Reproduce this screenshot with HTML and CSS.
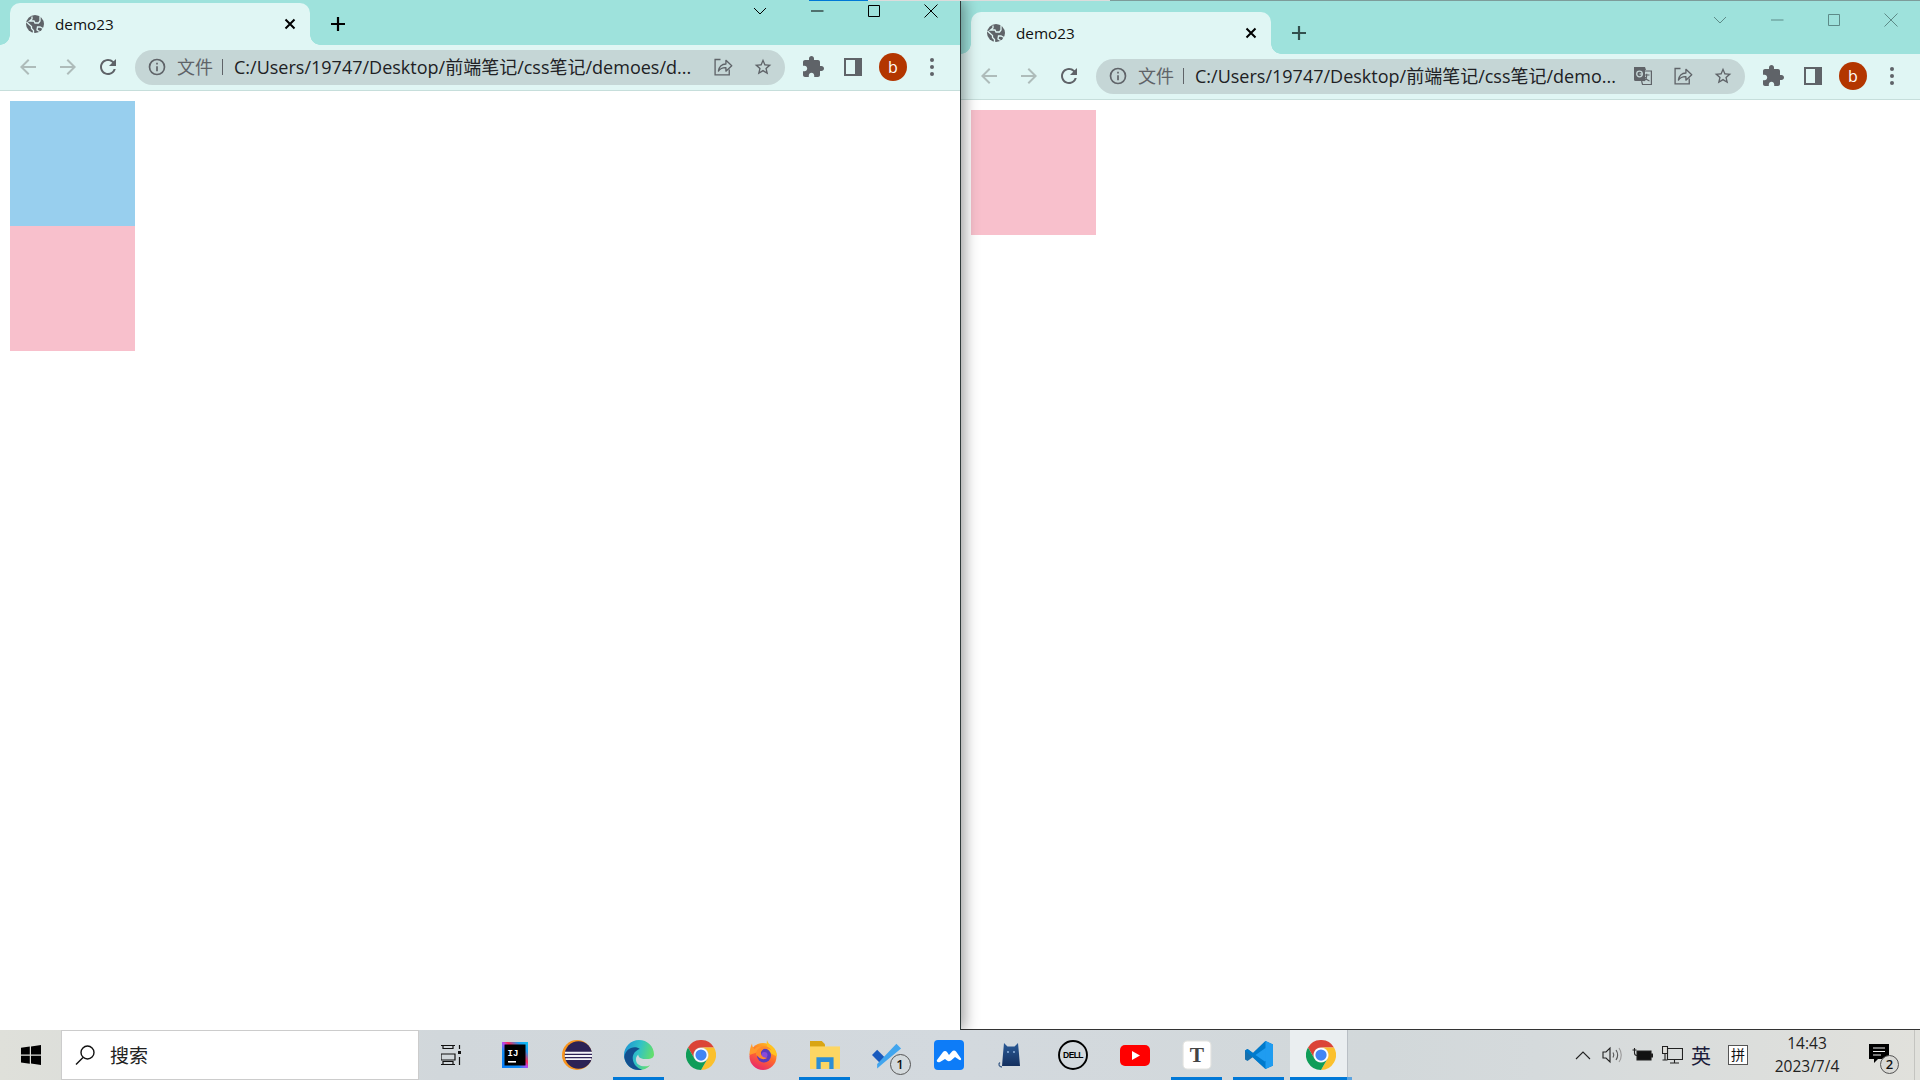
FILE: index.html
```html
<!DOCTYPE html>
<html lang="zh-CN">
<head>
  <meta charset="UTF-8">
  <title>demo23</title>
  <link rel="stylesheet" href="styles.css">
</head>
<body>
<svg class="defs" width="0" height="0">
  <defs>
    <symbol id="i-globe" viewBox="0 0 22 22"><circle cx="11" cy="11" r="9" fill="#5f6368"/><path fill="none" stroke="#e0f6f4" stroke-width="1.3" d="M2.500 9l5 4.500v2l2 2v2.500M8 3.500V6L5.500 8h4.500l1 2h3.500l1.500-2V3.500M19 15.500l-3-1.500h-2.500l-.5 3 2.500 1.500"/></symbol>
    <symbol id="i-back" viewBox="0 0 24 24"><path d="M20 11H7.830l5.590-5.590L12 4l-8 8 8 8 1.410-1.410L7.830 13H20v-2z"/></symbol>
    <symbol id="i-forward" viewBox="0 0 24 24"><path d="M4 11h12.170l-5.590-5.590L12 4l8 8-8 8-1.410-1.410L16.170 13H4v-2z"/></symbol>
    <symbol id="i-reload" viewBox="0 0 24 24"><path d="M17.650 6.350A7.958 7.958 0 0 0 12 4c-4.420 0-7.990 3.580-7.990 8s3.570 8 7.990 8c3.730 0 6.840-2.550 7.730-6h-2.080A5.990 5.990 0 0 1 12 18c-3.310 0-6-2.690-6-6s2.690-6 6-6c1.660 0 3.140.69 4.220 1.780L13 11h7V4l-2.350 2.350z"/></symbol>
    <symbol id="i-info" viewBox="0 0 24 24"><path fill-rule="evenodd" d="M12 2a10 10 0 1 0 0 20 10 10 0 0 0 0-20zm0 2a8 8 0 1 1 0 16 8 8 0 0 1 0-16z"/><path d="M11 11h2v6h-2zM11 7h2v2h-2z"/></symbol>
    <symbol id="i-share" viewBox="0 0 24 24"><path fill="none" stroke="currentColor" stroke-width="1.6" d="M9 3H2.500v18.500h17V15"/><path fill="none" stroke="currentColor" stroke-width="1.6" stroke-linejoin="round" d="M6.500 17c.5-5 4-8.500 9-8.600V4l7 6.600-7 6.400v-4.200c-4-.2-6.800 1-9 4.200z"/></symbol>
    <symbol id="i-star" viewBox="0 0 24 24"><path d="M22 9.240l-7.190-.62L12 2 9.190 8.630 2 9.240l5.460 4.730L5.820 21 12 17.270 18.180 21l-1.630-7.030L22 9.240zM12 15.400l-3.760 2.270 1-4.280-3.320-2.880 4.380-.38L12 6.100l1.710 4.040 4.380.38-3.320 2.880 1 4.280L12 15.400z"/></symbol>
    <symbol id="i-puzzle" viewBox="0 0 24 24"><path d="M20.500 11H19V7c0-1.100-.9-2-2-2h-4V3.500C13 2.120 11.880 1 10.500 1S8 2.120 8 3.500V5H4c-1.100 0-1.990.9-1.990 2v3.800H3.500c1.490 0 2.700 1.210 2.700 2.700s-1.210 2.700-2.700 2.700H2V20c0 1.100.9 2 2 2h3.800v-1.500c0-1.490 1.210-2.700 2.700-2.700 1.490 0 2.700 1.210 2.700 2.700V22H17c1.100 0 2-.9 2-2v-4h1.500c1.380 0 2.500-1.120 2.500-2.500S21.880 11 20.500 11z"/></symbol>
    <symbol id="i-panel" viewBox="0 0 18 18"><path fill-rule="evenodd" d="M0 0h18v18H0zM2 2v14h9V2z"/></symbol>
    <symbol id="i-translate" viewBox="0 0 20 20"><path fill="#5f6368" d="M1 1h11l1 3h-1v11H2.500A1.500 1.500 0 0 1 1 13.500z"/><path fill="none" stroke="#5f6368" stroke-width="1.2" d="M8 5h10.400v13.500H9.500L8.600 15"/><path fill="none" stroke="#5f6368" stroke-width="1.2" d="M11 9h5.500M13.700 7.800V9c0 3-1 5-3 6M12 11c.8 2 2.500 3.200 4.500 4"/><circle cx="6.500" cy="8" r="2.800" fill="none" stroke="#c5d6d6" stroke-width="1.3"/><path fill="#c5d6d6" d="M6.500 7.400h3.200v1.200H6.500z"/></symbol>
    <symbol id="i-chrome" viewBox="0 0 24 24">
      <path fill="#db4437" d="M1.600 6A12 12 0 0 1 22.400 6H12a6 6 0 0 0-5.200 9z"/>
      <path fill="#fbc02d" d="M22.400 6A12 12 0 0 1 12 24l5.200-9A6 6 0 0 0 12 6z"/>
      <path fill="#0f9d58" d="M12 24A12 12 0 0 1 1.600 6l5.200 9a6 6 0 0 0 10.400 0z"/>
      <circle cx="12" cy="12" r="5.600" fill="#fff"/>
      <circle cx="12" cy="12" r="4.500" fill="#4285f4"/>
    </symbol>
    <linearGradient id="g-edge" x1="0" y1="0" x2="1" y2="0.3"><stop offset="0" stop-color="#1a8fd6"/><stop offset=".55" stop-color="#32c2c6"/><stop offset="1" stop-color="#62de6e"/></linearGradient>
    <linearGradient id="g-ij" x1="0" y1="1" x2="1" y2="0"><stop offset="0" stop-color="#087cfa"/><stop offset=".35" stop-color="#0f8cf5"/><stop offset=".5" stop-color="#b74af7"/><stop offset=".6" stop-color="#fe2857"/><stop offset=".8" stop-color="#1c9cf2"/><stop offset="1" stop-color="#07c3f2"/></linearGradient>
    <linearGradient id="g-fox" x1="0.8" y1="0" x2="0.3" y2="1"><stop offset="0" stop-color="#ffc21f"/><stop offset=".5" stop-color="#ff6a2b"/><stop offset="1" stop-color="#e8246f"/></linearGradient>
    <linearGradient id="g-cat" x1="0" y1="0" x2="0" y2="1"><stop offset="0" stop-color="#2a5a97"/><stop offset="1" stop-color="#14305f"/></linearGradient>
  </defs>
</svg>

<div class="desktop">
  <div class="topline"><i class="line-blue"></i><i class="line-light"></i><i class="line-gray"></i></div>

  <section class="window window-front">
    <div class="tabstrip">
      <div class="tab">
        <svg class="favicon"><use href="#i-globe"/></svg>
        <span class="tab-title">demo23</span>
        <svg class="tab-close" viewBox="0 0 12 12"><path d="M1.500 1.500l9 9M10.500 1.500l-9 9"/></svg>
      </div>
      <svg class="new-tab" viewBox="0 0 16 16"><path d="M8 1v14M1 8h14"/></svg>
      <div class="caption">
        <svg viewBox="0 0 14 14"><path d="M1 4l6 6 6-6"/></svg>
        <svg viewBox="0 0 14 14"><path d="M1 7h12.500"/></svg>
        <svg viewBox="0 0 14 14"><path d="M1.500 1.500h11v11h-11z"/></svg>
        <svg viewBox="0 0 14 14"><path d="M.5.500l13 13M13.500.5l-13 13"/></svg>
      </div>
    </div>
    <div class="toolbar">
      <svg class="tool tool-off"><use href="#i-back"/></svg>
      <svg class="tool tool-off"><use href="#i-forward"/></svg>
      <svg class="tool"><use href="#i-reload"/></svg>
      <div class="omnibox">
        <svg class="omni-info"><use href="#i-info"/></svg>
        <span class="omni-label">文件</span>
        <span class="omni-sep"></span>
        <span class="omni-url">C:/Users/19747/Desktop/前端笔记/css笔记/demoes/d...</span>
        <svg class="omni-icon"><use href="#i-share"/></svg>
        <svg class="omni-icon"><use href="#i-star"/></svg>
      </div>
      <svg class="tool tool-right"><use href="#i-puzzle"/></svg>
      <svg class="tool tool-panel"><use href="#i-panel"/></svg>
      <div class="avatar-box"><span class="avatar">b</span></div>
      <div class="kebab"><i></i><i></i><i></i></div>
    </div>
    <main class="page">
      <div class="box box-blue"></div>
      <div class="box box-pink"></div>
    </main>
  </section>

  <section class="window window-back">
    <div class="tabstrip">
      <div class="tab">
        <svg class="favicon"><use href="#i-globe"/></svg>
        <span class="tab-title">demo23</span>
        <svg class="tab-close" viewBox="0 0 12 12"><path d="M1.500 1.500l9 9M10.500 1.500l-9 9"/></svg>
      </div>
      <svg class="new-tab" viewBox="0 0 16 16"><path d="M8 1v14M1 8h14"/></svg>
      <div class="caption">
        <svg viewBox="0 0 14 14"><path d="M1 4l6 6 6-6"/></svg>
        <svg viewBox="0 0 14 14"><path d="M1 7h12.500"/></svg>
        <svg viewBox="0 0 14 14"><path d="M1.500 1.500h11v11h-11z"/></svg>
        <svg viewBox="0 0 14 14"><path d="M.5.500l13 13M13.500.5l-13 13"/></svg>
      </div>
    </div>
    <div class="toolbar">
      <svg class="tool tool-off"><use href="#i-back"/></svg>
      <svg class="tool tool-off"><use href="#i-forward"/></svg>
      <svg class="tool"><use href="#i-reload"/></svg>
      <div class="omnibox">
        <svg class="omni-info"><use href="#i-info"/></svg>
        <span class="omni-label">文件</span>
        <span class="omni-sep"></span>
        <span class="omni-url">C:/Users/19747/Desktop/前端笔记/css笔记/demo...</span>
        <svg class="omni-icon"><use href="#i-translate"/></svg>
        <svg class="omni-icon"><use href="#i-share"/></svg>
        <svg class="omni-icon"><use href="#i-star"/></svg>
      </div>
      <svg class="tool tool-right"><use href="#i-puzzle"/></svg>
      <svg class="tool tool-panel"><use href="#i-panel"/></svg>
      <div class="avatar-box"><span class="avatar">b</span></div>
      <div class="kebab"><i></i><i></i><i></i></div>
    </div>
    <main class="page">
      <div class="box box-pink"></div>
    </main>
  </section>
</div>

<footer class="taskbar">
  <div class="start">
    <svg viewBox="0 0 20 20"><path d="M0 2.800l8.800-1.200v8H0zM10 1.400L20 0v9.600H10zM0 10.800h8.800v7.900L0 17.500zM10 10.800h10V20l-10-1.400z"/></svg>
  </div>
  <div class="search">
    <svg viewBox="0 0 20 20"><circle cx="12.500" cy="7.500" r="6.500"/><path d="M8 12.500L1 19.500"/></svg>
    <span>搜索</span>
  </div>
  <div class="taskview">
    <svg viewBox="0 0 20 20"><path d="M0 .5h14M2 .5v3h10v-3M0 9h14v6H0zM0 19.500h14M2 19.500v-3h10v3"/><path d="M18.500 0v4M18.500 12v8"/><path class="solid" d="M17 6h3v3h-3z"/></svg>
  </div>

  <div class="task">
    <svg class="task-ij" viewBox="0 0 26 26"><path fill="url(#g-ij)" d="M0 0h26v26H0z"/><path fill="#000" d="M2.500 2.500h21v21h-21z"/><path fill="#fff" d="M6 19h8v1.600H6z"/><text class="ij-text" x="5.500" y="13.500">IJ</text></svg>
  </div>
  <div class="task">
    <svg viewBox="0 0 30 30">
      <circle cx="15" cy="15" r="15" fill="#f7941e"/>
      <circle cx="16.500" cy="15" r="13.800" fill="#2c2255"/>
      <path fill="#f4f4f8" d="M3 11.800h27v2H3zM2.700 15h27.500v2H2.700zM3.500 18.300h26v1.800h-26z"/>
    </svg>
  </div>
  <div class="task open">
    <svg viewBox="0 0 24 24">
      <path fill="url(#g-edge)" d="M24 11.500C24 5 18.700 0 12 0 5.400 0 0 5.400 0 12c0 6.700 5.400 12 12 12 3.400 0 6.400-1.200 8.900-3.900-3.300 1.400-6.600 1.300-9-.3-2.800-1.900-3.300-5.800-.4-8.300-.4 1.200 1 3.700 5.500 3.700 3.800 0 7-.6 7-3.700z"/>
      <path fill="#13508f" d="M.2 13.500C1 8.800 4.500 5.800 8.500 5.800c1.600 0 3.200.5 4.200 1.400-3.500 1-6 4-5.700 7.800.3 4.200 3.500 7.800 7.500 8.700-1 .2-1.700.3-2.500.3-6 0-11-4.500-11.800-10.500z"/>
    </svg>
  </div>
  <div class="task"><svg><use href="#i-chrome"/></svg></div>
  <div class="task">
    <svg viewBox="0 0 28 30">
      <circle cx="14" cy="16.500" r="13.500" fill="url(#g-fox)"/>
      <path fill="#ffc21f" d="M18 0c.5 3 3 4.500 5.500 6.500 3 2.500 4.500 6 4.500 10L21 13c-1.500-4-4-7-3-13z"/>
      <path fill="#ff9a2e" d="M3 3.500c0 2.500 1 4 2.500 5.500C7.500 7 10 6 12.500 6.500L9 12l-8.500 3C.5 10.500 1.500 6.500 3 3.500z"/>
      <circle cx="15" cy="15.500" r="7" fill="#5b3bbd"/>
      <circle cx="15.500" cy="15" r="3" fill="#8b4ad8"/>
      <path fill="#ff8a2b" d="M7 14c0-4 4-8 9.500-7.500 3 .3 5 2 6 4-3-2.500-7-2.500-9-.5-2 1.500-2 4-.5 6 1 1.500 3.500 2 5.500 1.500-2.500 2.500-6.500 2-9-.5C8 15.500 7 15 7 14z"/>
    </svg>
  </div>
  <div class="task open">
    <svg viewBox="0 0 28 26">
      <path fill="#d9a514" d="M0 0h11l3 3v3H0z"/>
      <path fill="#fdd663" d="M0 5h28v21H0z"/>
      <path fill="#2c8ed6" d="M6 15h16v11h-4v-6.500H10V26H6z"/>
    </svg>
  </div>
  <div class="task">
    <svg viewBox="0 0 32 30">
      <path fill="#195abd" d="M0 15l5.500-5.500L15 19l-5.500 5.500z"/>
      <path fill="#41a5ee" d="M9.500 24.500L30 3l5 5-20 16.500-5.500 5z" transform="translate(-4 0)"/>
    </svg>
    <span class="count-badge">1</span>
  </div>
  <div class="task">
    <svg viewBox="0 0 30 30">
      <rect width="30" height="30" rx="4" fill="#0d7cf8"/>
      <path fill="#fff" d="M3 20l6-8c1-1.500 3-1.500 4 0l2 3 3-3.500c1-1.300 3-1.300 4 0l5 7c.7 1-.5 2-1.500 1.500L21 17l-4 3.500c-1.500 1-3 1-4 0l-2-1.500-5 3c-2 1-4-.5-3-2z"/>
    </svg>
  </div>
  <div class="task">
    <svg viewBox="0 0 30 30">
      <path fill="url(#g-cat)" d="M8 3l3.500 3.500h7L22 3l1 11 1 12H6l1-12z"/>
      <path fill="none" stroke="#3f5f89" stroke-width="1.3" d="M6 27c-3 0-4-3-2-4.500"/>
      <circle cx="12" cy="12" r=".9" fill="#9fc0e8"/>
      <circle cx="18" cy="12" r=".9" fill="#9fc0e8"/>
    </svg>
  </div>
  <div class="task">
    <svg viewBox="0 0 30 30">
      <circle cx="15" cy="15" r="14" fill="none" stroke="#000" stroke-width="1.9"/>
      <text class="dell-text" x="15" y="17.800">DELL</text>
    </svg>
  </div>
  <div class="task">
    <svg viewBox="0 0 30 21" class="wide"><rect width="30" height="21" rx="5" fill="#f00"/><path fill="#fff" d="M12 6l8 4.500-8 4.500z"/></svg>
  </div>
  <div class="task open">
    <svg viewBox="0 0 28 28"><rect x="1" y="1" width="26" height="26" rx="4" fill="#fff" stroke="#e4e4e0"/><text class="t-text" x="14" y="20.500">T</text></svg>
  </div>
  <div class="task open">
    <svg viewBox="0 0 30 30">
      <path fill="#0065a9" d="M21.500 1L9 13 3.500 9 1 10.500v9L3.500 21 9 17l12.500 12z" opacity=".9"/>
      <path fill="#007acc" d="M21.500 1L9 13 3.500 9 1 10.500 6 15l15.500 14L29 25.500V4.500z"/>
      <path fill="#1f9cf0" d="M21.500 1L29 4.500v21L21.500 29V8L11.500 15l10 7z"/>
    </svg>
  </div>
  <div class="task open active"><svg><use href="#i-chrome"/></svg></div>

  <div class="tray">
    <svg class="tray-chevron" viewBox="0 0 16 10"><path d="M1 9l7-7 7 7"/></svg>
    <svg class="tray-speaker" viewBox="0 0 20 18"><path d="M1 6h3l4-4v14l-4-4H1z"/><path d="M11 6.500c1 1.500 1 3.500 0 5M14 4c2 3 2 7 0 10" class="soft"/><path d="M17 2c3 4 3 10 0 14" class="softer"/></svg>
    <svg class="tray-battery" viewBox="0 0 21 14"><path class="solid" d="M5 3h14v9H5zM19.500 6H21v3h-1.500z"/><path d="M2.500 0v5M.5 2h4M2.500 5c0 2 .5 2.500 2.500 2.500"/></svg>
    <svg class="tray-network" viewBox="0 0 21 18"><path d="M5.500 2.500h15v11h-15zM8 17h9M12.500 13.500V17"/><path class="fill-tray" d="M.5.500h5v7h-5z"/><path d="M3 7.500V14M.5 14h5"/></svg>
    <span class="tray-ime">英</span>
    <span class="tray-pinyin">拼</span>
    <div class="clock"><span>14:43</span><span>2023/7/4</span></div>
    <div class="notify">
      <svg viewBox="0 0 20 20"><path d="M0 0h20v15H9l-4 4v-4H0z"/><path class="notify-lines" d="M4 4h12M4 7.500h12M4 11h8"/></svg>
      <span class="count-badge count-notify">2</span>
    </div>
  </div>
</footer>
</body>
</html>
```

FILE: styles.css
```css
* { box-sizing: border-box; margin: 0; padding: 0; }

body {
  width: 1920px;
  height: 1080px;
  overflow: hidden;
  font-family: "Open Sans", "Noto Sans CJK SC", sans-serif;
  background: #fff;
}
.defs { position: absolute; }

.desktop {
  position: relative;
  height: 1030px;
  overflow: hidden;
}
.topline {
  position: absolute;
  top: 0;
  left: 809px;
  right: 0;
  height: 1px;
  display: flex;
  z-index: 3;
}
.line-blue { width: 59px; background: #0078d7; }
.line-light { width: 242px; background: #dcdcdc; }
.line-gray { flex: 1; background: #7d9c9a; }

/* windows sit on a free canvas */
.window {
  position: absolute;
  top: 0;
  height: 1030px;
  display: flex;
  flex-direction: column;
  background: #fff;
}
.window-front {
  left: 0;
  width: 961px;
  border-right: 1px solid #2f3a3a;
  box-shadow: 3px 0 14px rgba(0, 0, 0, .4);
  z-index: 2;
}
.window-back {
  left: 961px;
  width: 959px;
  border-bottom: 1px solid #333;
}

.tabstrip {
  position: relative;
  display: flex;
  align-items: flex-end;
  padding-left: 10px;
  background: #9ee2dc;
}
.window-front .tabstrip { height: 45px; }
.window-back .tabstrip { height: 54px; }

.tab {
  position: relative;
  width: 300px;
  height: 42px;
  display: flex;
  align-items: center;
  padding: 0 14px;
  background: #e0f6f4;
  border-radius: 10px 10px 0 0;
}
.tab::before, .tab::after {
  content: "";
  position: absolute;
  bottom: 0;
  width: 10px;
  height: 10px;
}
.tab::before {
  left: -10px;
  background: radial-gradient(circle at 0 0, transparent 9.5px, #e0f6f4 10px);
}
.tab::after {
  right: -10px;
  background: radial-gradient(circle at 100% 0, transparent 9.5px, #e0f6f4 10px);
}
.favicon {
  width: 22px;
  height: 22px;
  flex: none;
}
.tab-title {
  margin: 0 0 1px 9px;
  font-size: 15.3px;
  color: #111;
}
.tab-close {
  margin-left: auto;
  width: 12px;
  height: 12px;
  fill: none;
  stroke: #000;
  stroke-width: 2;
}
.new-tab {
  width: 16px;
  height: 16px;
  margin: 0 0 13px 20px;
  fill: none;
  stroke: #000;
  stroke-width: 2.2;
}
.window-back .new-tab { stroke: #33504e; }

.caption {
  margin-left: auto;
  align-self: flex-start;
  display: flex;
  padding-right: 1px;
}
.caption svg {
  width: 14px;
  height: 14px;
  margin: 4px 21.5px 0;
  fill: none;
  stroke: #000;
  stroke-width: 1;
}
.window-back .caption svg { stroke: #5d8b88; margin-top: 13px; }

.toolbar {
  height: 46px;
  display: flex;
  align-items: center;
  padding: 0 9px 1px 7.5px;
  background: #e0f6f4;
  border-bottom: 1px solid #c6dedb;
}
.tool {
  width: 24px;
  height: 24px;
  margin: 0 8px;
  fill: #5f6368;
  flex: none;
}
.tool-off { fill: #aebcba; }
.tool-right { margin-left: 16px; }
.tool-panel { width: 18px; height: 18px; margin: 0 11px; }

.omnibox {
  flex: 1;
  min-width: 0;
  height: 35px;
  margin-left: 7.5px;
  display: flex;
  align-items: center;
  padding: 0 12px;
  background: #c5d6d6;
  border-radius: 18px;
}
.omni-info {
  width: 20px;
  height: 20px;
  fill: #5f6368;
  flex: none;
}
.omni-label {
  margin: 0 0 2px 10px;
  font-size: 18px;
  color: #5f6368;
}
.omni-sep {
  width: 1px;
  height: 16px;
  margin: 0 11px 0 9px;
  background: #5f6368;
}
.omni-url {
  flex: 1;
  min-width: 0;
  margin-bottom: 2px;
  font-size: 18px;
  white-space: nowrap;
  color: #202124;
}
.omni-icon {
  width: 20px;
  height: 20px;
  margin-left: 20px;
  color: #5f6368;
  fill: #5f6368;
  flex: none;
}

.avatar-box { width: 40px; display: flex; justify-content: center; }
.avatar {
  width: 28px;
  height: 28px;
  border-radius: 50%;
  background: #b33600;
  color: #fff;
  font-size: 16px;
  line-height: 28px;
  text-align: center;
}
.kebab {
  width: 38px;
  display: flex;
  flex-direction: column;
  align-items: center;
  gap: 3px;
}
.kebab i {
  width: 4px;
  height: 4px;
  border-radius: 50%;
  background: #5f6368;
}

.page { flex: 1; padding: 10px; }
.box { width: 125px; height: 125px; }
.box-blue { background: #98cfee; }
.box-pink { background: #f8c0cc; }

/* taskbar */
.taskbar {
  height: 50px;
  display: flex;
  align-items: center;
  background: linear-gradient(90deg, #dfe0da 0, #d1d7db 23%, #d3d9de 50%, #d2d8da 72%, #d5dadc 80%, #e1e1dc 100%);
}
.start {
  width: 61px;
  display: flex;
  justify-content: center;
}
.start svg { width: 20px; height: 20px; }
.search {
  width: 358px;
  height: 50px;
  display: flex;
  align-items: center;
  gap: 15px;
  padding-left: 13px;
  background: #fff;
  border: 1px solid #ccc;
}
.search svg {
  width: 20px;
  height: 20px;
  fill: none;
  stroke: #111;
  stroke-width: 1.4;
}
.search span { font-size: 19px; color: #222; }
.taskview {
  width: 64.5px;
  display: flex;
  justify-content: center;
}
.taskview svg {
  width: 20px;
  height: 20px;
  fill: none;
  stroke: #111;
  stroke-width: 1.2;
}
.taskview .solid { fill: #111; stroke: none; }

.task {
  position: relative;
  width: 62px;
  height: 50px;
  display: flex;
  align-items: center;
  justify-content: center;
}
.task > svg { width: 30px; height: 30px; }
.task > svg.wide { height: 21px; }
.task > svg.task-ij { width: 26px; height: 26px; }
.task.open::after {
  content: "";
  position: absolute;
  bottom: 0;
  left: 5.5px;
  right: 5.5px;
  height: 3px;
  background: #0078d7;
}
.task.active {
  background: linear-gradient(90deg, #eaeef0 57px, #b9bfc5 57px, #b9bfc5 58px, transparent 58px);
}
.task.active::after {
  left: 0;
  right: 0;
  background: linear-gradient(90deg, #0078d7 57px, #5ba3e0 57px);
}
.ij-text {
  font-family: "Liberation Mono", monospace;
  font-size: 9px;
  font-weight: 700;
  fill: #fff;
}
.dell-text {
  font-family: "Liberation Sans", sans-serif;
  font-size: 8.5px;
  font-weight: 700;
  text-anchor: middle;
  letter-spacing: -.6px;
}
.t-text {
  font-family: "Liberation Serif", serif;
  font-size: 20px;
  font-weight: 700;
  text-anchor: middle;
  fill: #444;
}
.count-badge {
  position: absolute;
  left: 34px;
  top: 24px;
  width: 21px;
  height: 21px;
  border: 1px solid #555;
  border-radius: 50%;
  font-size: 13px;
  font-weight: 600;
  line-height: 19px;
  text-align: center;
  color: #111;
  background: #d4dadd;
}

.tray {
  margin-left: auto;
  width: 350px;
  height: 50px;
  display: flex;
  align-items: center;
  border-right: 5px solid #e1e1dc;
  box-shadow: inset -1px 0 0 #c4c4c0;
}
.tray svg { fill: none; stroke: #222; stroke-width: 1.1; flex: none; }
.tray-chevron { width: 16px; height: 10px; margin: 0 11px 0 5px; }
.tray-speaker { width: 20px; height: 18px; margin-right: 10px; }
.tray-speaker .soft { stroke: #555; }
.tray-speaker .softer { stroke: #999; }
.tray-battery { width: 21px; height: 14px; margin-right: 9px; }
.tray svg .solid { fill: #111; }
.tray-network { width: 21px; height: 18px; margin-right: 5px; }
.tray svg .fill-tray { fill: #e0e0dc; }
.tray-ime { font-size: 20px; color: #1b1b3a; width: 26px; text-align: center; }
.tray-pinyin {
  width: 20px;
  height: 20px;
  margin-left: 14px;
  border: 1px solid #555;
  background: #fff;
  font-size: 14px;
  line-height: 18px;
  text-align: center;
  color: #111;
}
.clock {
  width: 94px;
  margin-left: 12px;
  display: flex;
  flex-direction: column;
  align-items: center;
  gap: 4px;
  font-size: 15.5px;
  line-height: 19px;
  color: #222;
}
.notify {
  position: relative;
  width: 52px;
  height: 50px;
  display: flex;
  align-items: center;
  justify-content: center;
}
.tray .notify svg {
  width: 20px;
  height: 20px;
  margin: -2px 3px 0 0;
  fill: #000;
  stroke: none;
}
.tray .notify .notify-lines { stroke: #eee; stroke-width: 1; }
.count-notify { left: 26px; top: 25px; width: 19px; height: 19px; line-height: 17px; background: #d9d9d5; }
```
